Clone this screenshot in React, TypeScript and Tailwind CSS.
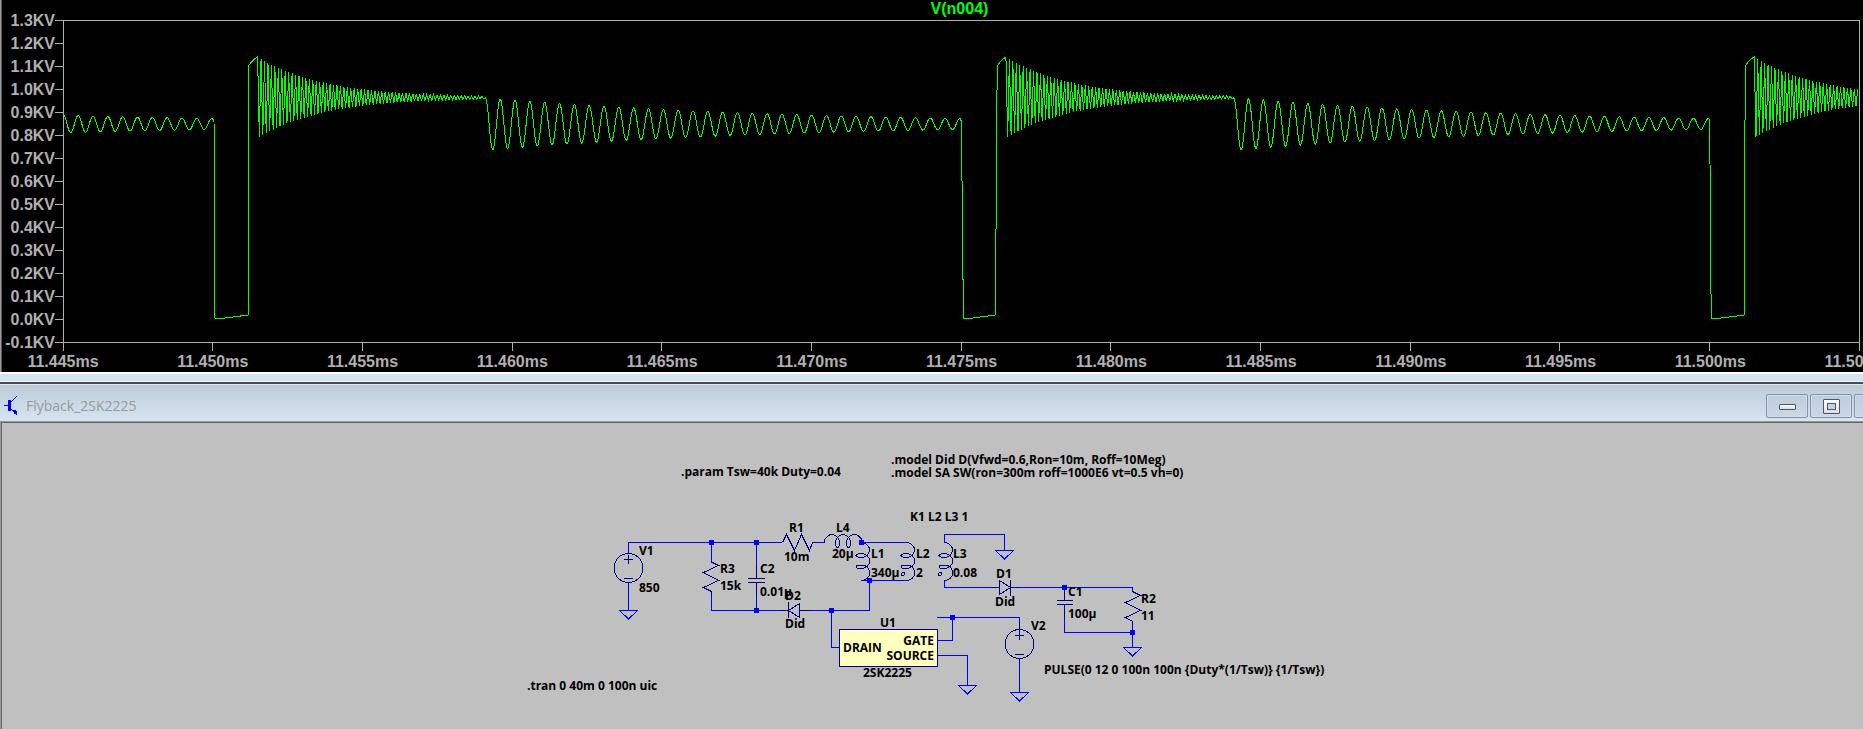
import React from "react";

/* ---------- waveform ---------- */

const PERIOD = 748.33;
const RING_MID = 124;
const CLAMP_MID = 97.5;

// Falling and rising edges of each switching cycle: [fall top, fall bottom, rise bottom, rise top]
const EDGES = [
  [214, 215, 248.4, 248.4],
  [961.4, 963.4, 995.4, 997.2],
  [1709.6, 1711.2, 1744.4, 1745.2],
];

function drainRinging(points: string[], start: number, from: number, to: number) {
  const firstTrough = start + 7.2;
  for (let x = from; x <= to; x += 0.5) {
    const amp = 25.7 * Math.exp(-(x - firstTrough) / 298);
    const y = RING_MID + amp * Math.cos((2 * Math.PI * (x - firstTrough)) / 14.83);
    points.push(`${x.toFixed(2)},${y.toFixed(2)}`);
  }
}

function clampRinging(points: string[], start: number, to: number) {
  let sign = 1;
  for (let x = start; x <= to; x += 1.725) {
    const amp = 40.5 * Math.exp(-(x - start) / 66);
    points.push(`${x.toFixed(2)},${(CLAMP_MID - sign * amp).toFixed(2)}`);
    sign = -sign;
  }
}

function buildTrace() {
  const points: string[] = [];
  drainRinging(points, 485.6 - PERIOD, 63, 213.5);
  EDGES.forEach(([fallTop, fallBottom, riseBottom, riseTop], i) => {
    points.push(`${fallTop},122`, `${fallTop + 0.3},150`, `${fallBottom},318`, `${fallBottom + 2},319`);
    points.push(`${riseBottom},315`, `${riseTop},66`, `${riseTop + 3},62`, `${riseTop + 6},59`);
    const peak = 257.6 + PERIOD * i;
    points.push(`${peak - 1},57.5`);
    clampRinging(points, peak, Math.min(484.5 + PERIOD * i, 1859));
    if (i < 2) {
      const start = 485.6 + PERIOD * i;
      drainRinging(points, start, start, EDGES[i + 1][0] - 0.4);
    }
  });
  return points.join(" ");
}

const TRACE = buildTrace();
const Y_LABELS = Array.from({ length: 15 }, (_, i) => `${((13 - i) / 10).toFixed(1)}KV`);
const X_LABELS = Array.from({ length: 13 }, (_, i) => `${(11.445 + i * 0.005).toFixed(3)}ms`);

function WaveformPane() {
  return (
    <section
      aria-label="Waveform"
      className="flex overflow-hidden border-l border-[#9a9a9a] bg-black font-['Liberation_Sans',Arial,sans-serif] text-base font-bold text-[#b0b0b0]"
    >
      <div className="w-px shrink-0 bg-[#5c5c5c]" />
      <div className="w-[53px] shrink-0 pt-[9px]">
        {Y_LABELS.map((label) => (
          <div key={label} className="flex h-[23px] items-center justify-end whitespace-nowrap">
            {label}
          </div>
        ))}
      </div>
      <div className="min-w-0 flex-1 pr-[3px]">
        <h1 className="h-5 pl-1 text-center leading-[18px] text-[#00ff00]">V(n004)</h1>
        <svg
          className="block h-[332px] w-full"
          viewBox="55 20 1805 332"
          preserveAspectRatio="none"
          shapeRendering="crispEdges"
          fill="none"
          strokeWidth="1"
        >
          <polyline points={TRACE} stroke="#00ff00" />
          <g stroke="#b0b0b0">
            <path d="M63.5 20.5H1859.5V342.5H63.5Z" />
            {Y_LABELS.map((label, i) => (
              <path key={label} d={`M55 ${20.5 + i * 23}H63`} />
            ))}
            {X_LABELS.map((label, i) => (
              <path key={label} d={`M${Math.floor(63.1 + i * 149.67) + 0.5} 342V351`} />
            ))}
          </g>
        </svg>
        <div className="flex h-5 justify-between pl-2 leading-5">
          {X_LABELS.map((label) => (
            <span key={label} className="flex w-0 justify-center whitespace-nowrap">
              {label}
            </span>
          ))}
        </div>
      </div>
    </section>
  );
}

/* ---------- title bar ---------- */

const captionButton =
  "flex h-6 w-[42px] shrink-0 items-center justify-center rounded-[2px] border border-[#8591ad] bg-linear-to-b from-[#c0cddc] to-[#cbd8e7] shadow-[inset_0_0_0_1px_#d3deea]";

function TitleBar() {
  return (
    <header className="flex h-9 items-center overflow-hidden bg-linear-to-b from-[#bdcbd9] to-[#d7e4f1] pt-1.5 pl-1">
      <svg className="h-5 w-[15px] shrink-0" viewBox="0 0 15 20" shapeRendering="crispEdges">
        <path d="M0 9.5H5M7 6L12.5 0.5M7 13L13.5 19.5" stroke="#0000ff" fill="none" />
        <path d="M4 4H7V15H4ZM9 14H12V15H13V18H10V16H9Z" fill="#0000ff" />
      </svg>
      <h2 className="flex-1 pl-[7px] font-['Open_Sans','Noto_Sans',sans-serif] text-sm leading-5 text-[#999999]">
        Flyback_2SK2225
      </h2>
      <div className="-mr-[33px] flex gap-0.5">
        <button type="button" aria-label="Minimize" className={captionButton}>
          <span className="mt-0.5 h-1.5 w-[17px] rounded-[1px] border border-[#50546a] bg-linear-to-b from-white to-[#dcdcdc]" />
        </button>
        <button type="button" aria-label="Maximize" className={captionButton}>
          <span className="flex h-[15px] w-[17px] items-center justify-center rounded-[1px] border border-[#50546a] bg-linear-to-b from-white to-[#dedede]">
            <span className="h-[7px] w-[9px] border border-[#50546a] bg-[#c5d2e1]" />
          </span>
        </button>
        <button type="button" aria-label="Close" className={captionButton} />
      </div>
    </header>
  );
}

/* ---------- schematic ---------- */

const LABELS: [number, number, string][] = [
  [681, 476, ".param Tsw=40k Duty=0.04"],
  [891, 464, ".model Did D(Vfwd=0.6,Ron=10m, Roff=10Meg)"],
  [891, 477, ".model SA SW(ron=300m roff=1000E6 vt=0.5 vh=0)"],
  [527, 690, ".tran 0 40m 0 100n uic"],
  [1044, 674, "PULSE(0 12 0 100n 100n {Duty*(1/Tsw)} {1/Tsw})"],
  [910, 521, "K1 L2 L3 1"],
  [639, 555, "V1"],
  [639, 592, "850"],
  [720, 573, "R3"],
  [720, 590, "15k"],
  [760, 573, "C2"],
  [760, 596, "0.01µ"],
  [785, 600, "D2"],
  [785, 628, "Did"],
  [789, 532, "R1"],
  [784, 561, "10m"],
  [836, 532, "L4"],
  [832, 558, "20µ"],
  [871, 558, "L1"],
  [871, 577, "340µ"],
  [916, 558, "L2"],
  [916, 577, "2"],
  [953, 558, "L3"],
  [953, 577, "0.08"],
  [996, 578, "D1"],
  [995, 606, "Did"],
  [1068, 596, "C1"],
  [1068, 618, "100µ"],
  [1141, 603, "R2"],
  [1141, 620, "11"],
  [880, 627, "U1"],
  [863, 677, "2SK2225"],
  [843, 652, "DRAIN"],
  [1031, 630, "V2"],
];

const NODES: [number, number][] = [
  [711, 542],
  [756, 542],
  [861, 542],
  [869, 580],
  [756, 610],
  [831, 610],
  [952, 617],
  [1064, 587],
  [1132, 632],
];

const GROUNDS: [number, number][] = [
  [628.5, 610.5],
  [1004.5, 550.5],
  [967.5, 685.5],
  [1019.5, 692.5],
  [1132.5, 647.5],
];

function Coil({ x }: { x: number }) {
  return (
    <path
      transform={`translate(${x} 542.5)`}
      d="M0 0C4 0 8 3.5 8 7C8 10.5 5 15 0 15C-3 15 -5.5 14 -5.5 13C-5.5 12 -3 11 0 11C5 11 8 14.5 8 18.5C8 22.5 5 26 0 26C-3 26 -5.5 25.5 -5.5 24.5C-5.5 23.5 -3 22.5 0 22.5C5 22.5 8 26 8 30.5C8 34.5 5 38 0 38"
    />
  );
}

function Source({ x, y }: { x: number; y: number }) {
  return (
    <g transform={`translate(${x} ${y})`}>
      <circle r="14.5" />
      <path d="M-4.5 -8.5H4.5M0 -13V-4.5M-4.5 10.5H4.5" />
    </g>
  );
}

function Schematic() {
  return (
    <svg className="block h-auto w-full" viewBox="2 423 1861 306" role="img" aria-label="Flyback converter schematic">
      <rect x="839.5" y="629.5" width="98" height="37" fill="#ffffc0" stroke="#000080" shapeRendering="crispEdges" />
      <g fill="none" stroke="#0000ff" shapeRendering="crispEdges">
        <path d="M628.5 553V542.5H782M628.5 583V610M711.5 542.5V562M711.5 595V610.5H780M756.5 542.5V566M756.5 595V610.5" />
        <path d="M816 542.5H824.5M862 542.5H907M810 610.5H869.5V580.5M861 580.5H907M831.5 610.5V647.5H839" />
        <path d="M944.5 543V534.5H1004.5V550M944.5 580V587.5H991M1019 587.5H1132.5V592M1064.5 587V592M1064.5 617V632.5H1132.5M1132.5 627V647" />
        <path d="M938 640.5H952.5V617.5M937 617.5H1019.5V622M938 655.5H967.5V685M1019.5 664V692" />
        {GROUNDS.map(([x, y]) => (
          <path key={x} d={`M${x - 9} ${y}H${x + 9}L${x} ${y + 8.5}Z`} />
        ))}
      </g>
      <g fill="none" stroke="#000080" shapeRendering="crispEdges">
        <Source x={628.5} y={568} />
        <Source x={1019.5} y={644} />
        <path d="M1019.5 622V631M1019.5 658V664" />
        <path d="M711.5 561V562L718.5 565.5L703.5 572.5L718.5 580.5L703.5 587.5L711.5 591.5V595" />
        <path d="M1132.5 591V591.5L1140.5 595.5L1125.5 602.5L1140.5 610.5L1125.5 617.5L1132.5 621.5V627" />
        <path d="M782.5 542.5L786.5 534.5L794.5 550.5L801.5 534.5L809.5 550.5L812.5 542.5H816" />
        <path d="M756.5 566V578M748 578.5H765M748 582.5H765M756.5 583V595" />
        <path d="M1064.5 592V600M1057 600.5H1073M1057 604.5H1073M1064.5 605V617" />
        <path d="M780 610.5H788M788.5 602V618M788.5 610.5L799.5 603.5V617.5ZM800 610.5H810" />
        <path d="M991 587.5H999M1010.5 580V596M1010.5 587.5L999.5 580.5V594.5ZM1011 587.5H1019" />
        <path d="M824.5 542.5V540.5C825 538 829 534.5 831.5 534.5C835 534.5 839.5 538 839.5 542C839.5 545 838.5 547.5 837.5 547.5C836.5 547.5 835.5 545 835.5 542C835.5 538 840 534.5 843 534.5C846.5 534.5 850.5 538 850.5 542C850.5 545 849.5 547.5 848.5 547.5C847.5 547.5 846.5 545 846.5 542C846.5 538 851 534.5 854.5 534.5C858 534.5 861.5 538 862 541" />
        <Coil x={861.5} />
        <Coil x={906.5} />
        <Coil x={944.5} />
        <circle cx="903" cy="574" r="1.5" />
        <circle cx="940" cy="574" r="1.5" />
      </g>
      <g fill="#0000ff" shapeRendering="crispEdges">
        {NODES.map(([x, y]) => (
          <rect key={`${x}-${y}`} x={x - 2} y={y - 2} width="5" height="5" />
        ))}
      </g>
      <g className="font-['Open_Sans','Noto_Sans',sans-serif] text-[12px] font-bold" fill="#000000">
        {LABELS.map(([x, y, text]) => (
          <text key={`${x}-${y}`} x={x} y={y}>
            {text}
          </text>
        ))}
        <text x="934" y="645" textAnchor="end">
          GATE
        </text>
        <text x="934" y="660" textAnchor="end">
          SOURCE
        </text>
      </g>
    </svg>
  );
}

export default function App() {
  return (
    <main className="flex min-h-screen flex-col overflow-hidden bg-[#c0c0c0]">
      <WaveformPane />
      <div className="h-2.5 border-t-2 border-b border-t-white border-b-[#eef4fa] bg-[#d6e4f1]" />
      <div className="h-[3px] border-b border-[#dfe7ef] bg-[#4c4c4c]" />
      <TitleBar />
      <section aria-label="Schematic" className="flex flex-1 flex-col border-t border-l border-[#979797]">
        <div className="flex-1 border-t border-l border-[#666666]">
          <Schematic />
        </div>
      </section>
    </main>
  );
}
